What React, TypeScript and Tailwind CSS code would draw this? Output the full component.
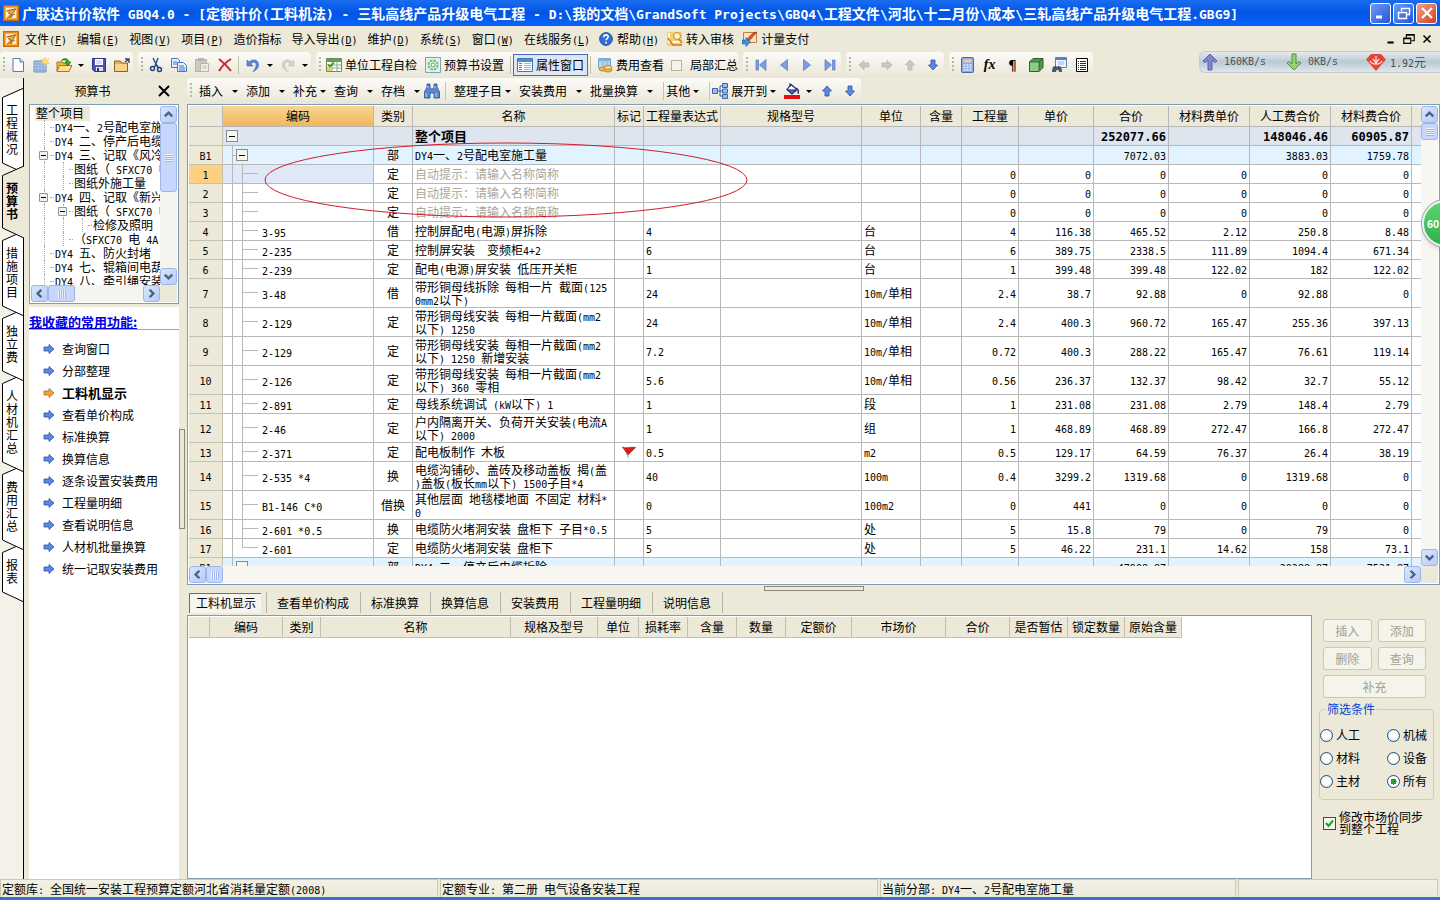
import { Fragment, useState } from "react";
import type { ReactNode } from "react";
import clsx from "clsx";

type Row = {
  no: string;
  code: string;
  kind: string;
  name: string;
  expr?: string;
  unit?: string;
  values: string[];
  tall?: boolean;
  flag?: boolean;
  hint?: boolean;
};

const HINT = "自动提示：请输入名称简称";

const rows: Row[] = [
  { no: "1", code: "", kind: "定", name: HINT, hint: true, values: ["0", "0", "0", "0", "0", "0"] },
  { no: "2", code: "", kind: "定", name: HINT, hint: true, values: ["0", "0", "0", "0", "0", "0"] },
  { no: "3", code: "", kind: "定", name: HINT, hint: true, values: ["0", "0", "0", "0", "0", "0"] },
  { no: "4", code: "3-95", kind: "借", name: "控制屏配电(电源)屏拆除", expr: "4", unit: "台", values: ["4", "116.38", "465.52", "2.12", "250.8", "8.48"] },
  { no: "5", code: "2-235", kind: "定", name: "控制屏安装  变频柜4+2", expr: "6", unit: "台", values: ["6", "389.75", "2338.5", "111.89", "1094.4", "671.34"] },
  { no: "6", code: "2-239", kind: "定", name: "配电(电源)屏安装 低压开关柜", expr: "1", unit: "台", values: ["1", "399.48", "399.48", "122.02", "182", "122.02"] },
  { no: "7", code: "3-48", kind: "借", name: "带形铜母线拆除 每相一片 截面(125\n0mm2以下)", expr: "24", unit: "10m/单相", values: ["2.4", "38.7", "92.88", "0", "92.88", "0"], tall: true },
  { no: "8", code: "2-129", kind: "定", name: "带形铜母线安装 每相一片截面(mm2\n以下) 1250", expr: "24", unit: "10m/单相", values: ["2.4", "400.3", "960.72", "165.47", "255.36", "397.13"], tall: true },
  { no: "9", code: "2-129", kind: "定", name: "带形铜母线安装 每相一片截面(mm2\n以下) 1250 新增安装", expr: "7.2", unit: "10m/单相", values: ["0.72", "400.3", "288.22", "165.47", "76.61", "119.14"], tall: true },
  { no: "10", code: "2-126", kind: "定", name: "带形铜母线安装 每相一片截面(mm2\n以下) 360 零相", expr: "5.6", unit: "10m/单相", values: ["0.56", "236.37", "132.37", "98.42", "32.7", "55.12"], tall: true },
  { no: "11", code: "2-891", kind: "定", name: "母线系统调试 (kW以下) 1", expr: "1", unit: "段", values: ["1", "231.08", "231.08", "2.79", "148.4", "2.79"] },
  { no: "12", code: "2-46", kind: "定", name: "户内隔离开关、负荷开关安装(电流A\n以下) 2000", expr: "1", unit: "组", values: ["1", "468.89", "468.89", "272.47", "166.8", "272.47"], tall: true },
  { no: "13", code: "2-371", kind: "定", name: "配电板制作 木板", expr: "0.5", unit: "m2", values: ["0.5", "129.17", "64.59", "76.37", "26.4", "38.19"], flag: true },
  { no: "14", code: "2-535 *4", kind: "换", name: "电缆沟铺砂、盖砖及移动盖板 揭(盖\n)盖板(板长mm以下) 1500子目*4", expr: "40", unit: "100m", values: ["0.4", "3299.2", "1319.68", "0", "1319.68", "0"], tall: true },
  { no: "15", code: "B1-146 C*0", kind: "借换", name: "其他层面 地毯楼地面 不固定 材料*\n0", expr: "0", unit: "100m2", values: ["0", "441", "0", "0", "0", "0"], tall: true },
  { no: "16", code: "2-601 *0.5", kind: "换", name: "电缆防火堵洞安装 盘柜下 子目*0.5", expr: "5", unit: "处", values: ["5", "15.8", "79", "0", "79", "0"] },
  { no: "17", code: "2-601", kind: "定", name: "电缆防火堵洞安装 盘柜下", expr: "5", unit: "处", values: ["5", "46.22", "231.1", "14.62", "158", "73.1"] },
];

const gridColumns = [
  { title: "", width: "w-[34px]" },
  { title: "编码", width: "w-[151px]" },
  { title: "类别", width: "w-[39px]" },
  { title: "名称", width: "w-[202px]" },
  { title: "标记", width: "w-[29px]" },
  { title: "工程量表达式", width: "w-[77px]" },
  { title: "规格型号", width: "w-[141px]" },
  { title: "单位", width: "w-[59px]" },
  { title: "含量", width: "w-[41px]" },
  { title: "工程量", width: "w-[57px]" },
  { title: "单价", width: "w-[75px]" },
  { title: "合价", width: "w-[75px]" },
  { title: "材料费单价", width: "w-[81px]" },
  { title: "人工费合价", width: "w-[81px]" },
  { title: "材料费合价", width: "w-[81px]" },
  { title: "", width: "" },
];

const detailColumns = [
  { title: "", width: "w-[21px]" },
  { title: "编码", width: "w-[73px]" },
  { title: "类别", width: "w-[38px]" },
  { title: "名称", width: "w-[190px]" },
  { title: "规格及型号", width: "w-[87px]" },
  { title: "单位", width: "w-[41px]" },
  { title: "损耗率", width: "w-[49px]" },
  { title: "含量", width: "w-[49px]" },
  { title: "数量", width: "w-[49px]" },
  { title: "定额价", width: "w-[66px]" },
  { title: "市场价", width: "w-[94px]" },
  { title: "合价", width: "w-[64px]" },
  { title: "是否暂估", width: "w-[58px]" },
  { title: "锁定数量", width: "w-[57px]" },
  { title: "原始含量", width: "w-[57px]" },
];

const menus: [string, string][] = [
  ["文件", "F"],
  ["编辑", "E"],
  ["视图", "V"],
  ["项目", "P"],
  ["造价指标", ""],
  ["导入导出", "D"],
  ["维护", "D"],
  ["系统", "S"],
  ["窗口", "W"],
  ["在线服务", "L"],
];

const sideTabs = ["工程概况", "预算书", "措施项目", "独立费", "人材机汇总", "费用汇总", "报表"];

const favorites = [
  "查询窗口",
  "分部整理",
  "工料机显示",
  "查看单价构成",
  "标准换算",
  "换算信息",
  "逐条设置安装费用",
  "工程量明细",
  "查看说明信息",
  "人材机批量换算",
  "统一记取安装费用",
];

const detailTabs = ["工料机显示", "查看单价构成", "标准换算", "换算信息", "安装费用", "工程量明细", "说明信息"];

const filters = ["人工", "机械", "材料", "设备", "主材", "所有"];

// Latin runs are set in a half-width face so that two letters span one CJK cell
function Mix({ children, latin = "text-[10px]" }: { children: string; latin?: string }) {
  return (
    <>
      {children.split(/([\x20-\x7e]+)/).map((part, i) =>
        i % 2 ? (
          <span key={i} className={clsx("font-['DejaVu_Sans_Mono',monospace] leading-[8px]", latin)}>
            {part}
          </span>
        ) : (
          <Fragment key={i}>{part}</Fragment>
        )
      )}
    </>
  );
}

function Svg({ children, size = "size-4" }: { children: ReactNode; size?: string }) {
  return (
    <svg viewBox="0 0 16 16" className={clsx("shrink-0", size)} fill="none" aria-hidden="true">
      {children}
    </svg>
  );
}

const AppIcon = () => (
  <Svg>
    <rect x=".5" y=".5" width="15" height="15" fill="#e98a1c" stroke="#c56a10" />
    <path d="M2.500 2.500h11v11h-11z" fill="#fdf0d0" stroke="#f6b54c" />
    <path d="M3.500 6 13 3.500 10 8l-2 5H4l3-4.500z" fill="#f3a93c" />
    <path d="M3.500 6c3-1 6-1 9-2.500M4 13c4-1 6-4 8.500-9M5 7.500l3.500 2M8 13c1-2 1.500-3 4-4" stroke="#8a4a0a" strokeWidth=".9" />
  </Svg>
);

const NewIcon = () => (
  <Svg>
    <path d="M3 1.500h7l3.500 3.500v9.500H3z" fill="#fdfeff" stroke="#5f7a9c" />
    <path d="M10 1.500V5h3.500" fill="#cfdff0" stroke="#5f7a9c" />
  </Svg>
);
const CalendarIcon = () => (
  <Svg>
    <path d="M1 4h10l2 2v9H1z" fill="#b9d0ee" stroke="#6c8fc0" />
    <path d="M4 4v11M7 4v11M10 4v11M1 7h12M1 10h12M1 13h12" stroke="#7598cc" strokeWidth=".7" />
    <path d="m12 0 1 3 3-1-2 2.500 2 2-3-.5-1 3-1-3-3 .5 2-2-2-2.500 3 1z" fill="#ffe27a" stroke="#f0bb45" strokeWidth=".5" />
  </Svg>
);
const OpenIcon = () => (
  <Svg>
    <path d="M1 5h5l1 1h6v8H1z" fill="#f0b63c" stroke="#a8741a" />
    <path d="M3.500 8.500H16l-3 6H1z" fill="#ffe08a" stroke="#a8741a" />
    <path d="M5 4c3-4 7-3 8 1h2l-3.500 4L9 5h2C10 3 8 2 5 4z" fill="#38a82c" stroke="#1c6e16" strokeWidth=".6" />
  </Svg>
);
const SaveIcon = () => (
  <Svg>
    <path d="M1.500 1.500h13v13h-11l-2-2z" fill="#5053b4" stroke="#2e3184" />
    <path d="M4 2h8v6H4z" fill="#fff" />
    <path d="M5 4h6M5 6h6" stroke="#b9bbd8" />
    <path d="M5 10h7v4H5z" fill="#dcdff0" />
    <path d="M6 11h2v3H6z" fill="#2e3184" />
  </Svg>
);
const FolderIcon = () => (
  <Svg>
    <path d="M.5 4h6l1 2h6v8.500H.5z" fill="#e8b24a" stroke="#8b6420" />
    <path d="M1 7h12v7H1z" fill="#f6d488" />
    <path d="M11 2h4v4M15 2l-4 3" stroke="#40454f" strokeWidth="1.300" />
  </Svg>
);
const CutIcon = () => (
  <Svg>
    <path d="M5 1l5 10M10 1 7 9" stroke="#29559b" strokeWidth="1.500" />
    <circle cx="4.500" cy="11.500" r="2" stroke="#1c3c78" strokeWidth="1.400" />
    <circle cx="11.500" cy="12.500" r="2" stroke="#1c3c78" strokeWidth="1.400" />
    <path d="m6 10 3-2 2 3" stroke="#1c3c78" />
  </Svg>
);
const CopyIcon = () => (
  <Svg>
    <path d="M.5 1.500h6l2 2v7h-8z" fill="#e6f0fd" stroke="#4377c4" />
    <path d="M2 5h4M2 7h4" stroke="#4377c4" />
    <path d="M6.500 5.500h6l3 3v6h-9z" fill="#e6f0fd" stroke="#4377c4" />
    <path d="M8 9h5M8 11h6M8 13h6" stroke="#4377c4" />
  </Svg>
);
const PasteIcon = () => (
  <Svg>
    <path d="M1.500 2.500h11v12h-11z" fill="#cbcac2" stroke="#b5b4aa" />
    <path d="M4 1h6v3H4z" fill="#b5b4aa" />
    <path d="M6.500 6.500h8v8h-8z" fill="#efeee8" stroke="#b5b4aa" />
    <path d="M8 9h5M8 11h5" stroke="#c4c3ba" />
  </Svg>
);
const DeleteIcon = () => (
  <Svg>
    <path d="M2 2c4 3 8 7 12 12M14 2C9 5 5 9 2 14" stroke="#d2222e" strokeWidth="2" />
  </Svg>
);
const UndoIcon = ({ off }: { off?: boolean }) => (
  <Svg>
    <g transform={off ? "matrix(-1 0 0 1 16 0)" : undefined}>
      <path d="M2 3v6h6L6 7c2-3 6-2 5 2-.4 2-1.500 4-3 5.500C12 13 14 10 13.500 7 13 2.500 7.500 1.500 4 5z" fill={off ? "#d4d3cb" : "#5b86dc"} stroke={off ? "#c3c2b9" : "#3a60b8"} strokeWidth=".6" />
    </g>
  </Svg>
);
const SheetCheckIcon = () => (
  <Svg>
    <path d="M.5 1.500h15v13H.5z" fill="#fff" stroke="#6e8a66" />
    <path d="M1 2h14v3H1z" fill="#5da24c" />
    <path d="M1 8h14M1 11h14M6 5v9M11 5v9" stroke="#8aa882" />
    <path d="M1 10h5v4H1z" fill="#f0c94e" />
    <path d="m2 7.500 2 2 4-4" stroke="#2c8a1e" strokeWidth="1.500" />
  </Svg>
);
const GearIcon = () => (
  <Svg>
    <path d="M.5.5h15v15H.5z" fill="#e2f1e4" stroke="#7ba3b8" />
    <circle cx="8" cy="8" r="4.500" stroke="#77b87a" strokeWidth="2" strokeDasharray="2.500 1" />
    <circle cx="8" cy="8" r="2" fill="#fff" stroke="#5ca660" />
  </Svg>
);
const PropsIcon = () => (
  <Svg>
    <path d="M.5 1.500h15v13H.5z" fill="#fff" stroke="#3d78b8" />
    <path d="M1 2h14v3H1z" fill="#4d8dd0" />
    <path d="M2 6.500h3M2 8.500h3M2 10.500h3M2 12.500h3" stroke="#3f9a5a" />
    <path d="M7 6.500h7M7 8.500h7M7 10.500h7M7 12.500h7" stroke="#a8b8c8" />
  </Svg>
);
const CoinsIcon = () => (
  <Svg>
    <path d="M1.500 1.500h12v9h-12z" fill="#dcecf8" stroke="#6fa5cc" />
    <path d="M2 2h11v2H2zM2 6h11M2 8h11M6 2v8M10 2v8" fill="#6fa5cc" stroke="#8db8d8" />
    <ellipse cx="6" cy="12" rx="4" ry="2" fill="#f2c25c" stroke="#bd8424" />
    <ellipse cx="11" cy="13" rx="4" ry="2" fill="#f2c25c" stroke="#bd8424" />
    <ellipse cx="11" cy="10.500" rx="4" ry="2" fill="#f8d888" stroke="#bd8424" />
  </Svg>
);

const navPaths = {
  first: "M3 3h2.500v10H3zM13 2.500v11L6.500 8z",
  prev: "M11.500 2.500v11L4.500 8z",
  next: "M4.500 2.500v11l7-5.500z",
  last: "M10.500 3H13v10h-2.500zM3 2.500v11L9.500 8z",
};
const NavIcon = ({ kind }: { kind: keyof typeof navPaths }) => (
  <Svg>
    <path d={navPaths[kind]} fill="#7d9ce8" stroke="#5276cc" strokeWidth=".7" />
  </Svg>
);

const arrowPaths = {
  left: "M3 8l5-4.500v2.500h5v4H8v2.500z",
  right: "M13 8 8 3.500V6H3v4h5v2.500z",
  up: "M8 3l4.500 5H10v5H6V8H3.500z",
  down: "M8 13l4.500-5H10V3H6v5H3.500z",
};
const ArrowIcon = ({ dir, tone = "blue" }: { dir: keyof typeof arrowPaths; tone?: "blue" | "gray" | "orange" }) => (
  <Svg>
    <path
      d={arrowPaths[dir]}
      fill={{ blue: "#5a88e6", gray: "#c9c8c0", orange: "#f3a13c" }[tone]}
      stroke={{ blue: "#2c4f9e", gray: "#bab9b0", orange: "#b06a1c" }[tone]}
      strokeWidth=".8"
    />
  </Svg>
);

const CalcIcon = () => (
  <Svg>
    <rect x="2.500" y=".5" width="12" height="15" rx="1" fill="#8fa9e0" stroke="#4a68a8" />
    <path d="M4.500 2.500h8v3h-8z" fill="#f5c9a8" />
    <path d="M4.500 8h8M4.500 10.500h8M4.500 13h8" stroke="#eef3ff" strokeWidth="1.500" strokeDasharray="2 1" />
  </Svg>
);
const CubeIcon = () => (
  <Svg>
    <path d="M1.500 5 5 1.500h10v9L11 14.500H1.500z" fill="#4d9a4b" stroke="#2c5f2c" />
    <path d="M1.500 5H11v9.500M11 5l4-3.500" stroke="#2c5f2c" />
    <path d="M2 5.500h8.500V14H2z" fill="#8fca86" />
  </Svg>
);
const PreviewIcon = () => (
  <Svg>
    <path d="M4.500.5h11v10h-11z" fill="#eef4fd" stroke="#5a80c0" />
    <path d="M5 1h10v2H5z" fill="#5a80c0" />
    <path d="M7 5h6M7 7h6" stroke="#9ab4de" />
    <path d="M1 15c0-4 1-6 3-6h1l1 1 1-1h1c2 0 3 2 3 6H8l-.5-2h-2L5 15z" fill="#4b5566" />
  </Svg>
);
const ListIcon = () => (
  <Svg>
    <path d="M2.500 1.500h11v13h-11z" fill="#fff" stroke="#000" />
    <path d="M4 4.500h1M4 6.500h1M4 8.500h1M4 10.500h1M4 12.500h1M6 4.500h6M6 6.500h6M6 8.500h6M6 10.500h6M6 12.500h6" stroke="#1c2a6a" />
  </Svg>
);
const BinocularsIcon = () => (
  <Svg>
    <path d="M3 1h3v3l1 2h2l1-2V1h3v3l2.500 5v6H10v-5H6v5H.5V9L3 4z" fill="#5c86d4" stroke="#2a4a90" strokeWidth=".8" />
    <path d="M2 10v4M12 10v4M4 3v2M11 3v2" stroke="#c4d6f8" />
  </Svg>
);
const ExpandIcon = () => (
  <Svg>
    <path d="M5 8h3M8 3v10M8 3h3M8 8h3M8 13h3" stroke="#44598c" />
    <path d="M.5 5.500h5v5h-5zM10.500.5h5v4h-5zM10.500 6h5v4h-5zM10.500 11.500h5v4h-5z" fill="#9dbcf0" stroke="#3d63b0" />
  </Svg>
);
const FillIcon = () => (
  <Svg>
    <path d="m7 1.500 6 5-5 4.500-5-4.500z" fill="#fff" stroke="#15206a" strokeWidth="1.200" />
    <path d="M4 7h8l-4 4zM12 5c3 1 3 3 2 6" fill="#5a6cc0" stroke="#15206a" />
    <path d="M6 0v4" stroke="#15206a" />
    <path d="M0 12h16v4H0z" fill="#e01010" />
  </Svg>
);
const HelpIcon = () => (
  <Svg size="size-[14px]">
    <circle cx="8" cy="8" r="7.300" fill="#2f6fd8" stroke="#1c479c" />
    <path d="M5.500 6c0-3.500 5-3.500 5-.5 0 2-2.500 2-2.500 4M8 11v2" stroke="#fff" strokeWidth="1.800" />
  </Svg>
);
const ReviewIcon = () => (
  <Svg>
    <path d="M0 1h15v14H0z" fill="#f5cf6c" />
    <path d="M2 2v9h11" stroke="#fff6dc" strokeWidth="2" />
    <path d="M1 7l5 7h9" stroke="#d97a1c" strokeWidth="1.600" />
    <circle cx="10" cy="5" r="3.500" fill="#fdf3d0" stroke="#c98a2c" />
    <path d="m12 8 3 4" stroke="#c98a2c" strokeWidth="1.500" />
  </Svg>
);
const PayIcon = () => (
  <Svg>
    <path d="M1.500 1.500h13v10h-13z" fill="#fbe3c0" stroke="#c97a3c" />
    <path d="m15 1-8 9-3 1 1-3 6-6z" fill="#e0552c" stroke="#8c2c10" strokeWidth=".6" />
    <path d="M0 9h4V6.500L8.500 11 4 15.500V13H0z" fill="#3c8fe0" stroke="#1c5aa0" strokeWidth=".6" />
  </Svg>
);

const Caret = () => <span className="h-0 w-0 shrink-0 border-x-3 border-t-3 border-x-transparent border-t-black" />;

const Divider = () => <span className="mx-[2px] h-[18px] w-px shrink-0 bg-[#c5c2b0]" />;

function Group({ children }: { children: ReactNode }) {
  return (
    <div className="flex h-full shrink-0 items-center rounded-sm bg-gradient-to-b from-[#fcfbf8] to-[#e9e6d6]">
      <span className="ml-[3px] mr-px h-4 w-[2px] shrink-0 bg-[repeating-linear-gradient(#b9b6a3_0_2px,transparent_2px_4px)]" />
      {children}
    </div>
  );
}

function Tool({ label, children }: { label: string; children: ReactNode }) {
  return (
    <button type="button" aria-label={label} className="flex h-[22px] w-[23px] shrink-0 items-center justify-center">
      {children}
    </button>
  );
}

function DropArrow({ label }: { label: string }) {
  return (
    <button type="button" aria-label={label} className="flex h-[22px] w-3 shrink-0 items-center justify-center">
      <Caret />
    </button>
  );
}

function TextTool({ text, pressed, children }: { text: string; pressed?: boolean; children: ReactNode }) {
  return (
    <button
      type="button"
      className={clsx(
        "flex h-[22px] shrink-0 items-center gap-[3px] border px-[3px]",
        pressed ? "border-[#4a6cb8] bg-[#dfe6f3]" : "border-transparent"
      )}
    >
      {children}
      {text}
    </button>
  );
}

function DropTool({ text, wide, tight, children }: { text: string; wide?: boolean; tight?: boolean; children?: ReactNode }) {
  return (
    <button type="button" className={clsx("flex h-[22px] shrink-0 items-center gap-[3px]", !tight && "pr-2")}>
      {children}
      <span className={wide ? "pr-[6px]" : ""}>{text}</span>
      <Caret />
    </button>
  );
}

const chevrons = { up: "M4 10l4-4 4 4", down: "M4 6l4 4 4-4", left: "M10 4 6 8l4 4", right: "M6 4l4 4-4 4" };

function ScrollButton({ dir, label }: { dir: keyof typeof chevrons; label: string }) {
  return (
    <button
      type="button"
      aria-label={label}
      className="flex size-[17px] shrink-0 items-center justify-center rounded-[3px] border border-[#9db5e8] bg-gradient-to-br from-[#dbe6fd] to-[#b7cbf8]"
    >
      <Svg size="size-[15px]">
        <path d={chevrons[dir]} stroke="#4d6185" strokeWidth="2.600" />
      </Svg>
    </button>
  );
}

function Thumb({ vertical, size }: { vertical?: boolean; size: string }) {
  return (
    <div
      className={clsx(
        "flex shrink-0 items-center justify-center rounded-[3px] border border-[#9db5e8] bg-[#c6d6fc]",
        size
      )}
    >
      <span
        className={clsx(
          "size-2",
          vertical
            ? "bg-[repeating-linear-gradient(#eef4fe_0_1px,#9cb4ec_1px_2px)]"
            : "bg-[repeating-linear-gradient(90deg,#eef4fe_0_1px,#9cb4ec_1px_2px)]"
        )}
      />
    </div>
  );
}

function TitleBar() {
  const caption = "flex size-[21px] items-center justify-center rounded-[3px] border border-white";
  return (
    <header className="flex h-[26px] shrink-0 items-center bg-gradient-to-b from-[#1a6cf0] via-[#0055e5] to-[#0a64fb] px-[3px]">
      <AppIcon />
      <h1 className="ml-[3px] min-w-0 flex-1 overflow-hidden text-[14px] font-bold leading-5 whitespace-pre text-white">
        <Mix latin="text-[13px]">
          {"广联达计价软件 GBQ4.0 - [定额计价(工料机法) - 三轧高线产品升级电气工程 - D:\\我的文档\\GrandSoft Projects\\GBQ4\\工程文件\\河北\\十二月份\\成本\\三轧高线产品升级电气工程.GBG9]"}
        </Mix>
      </h1>
      <div className="flex gap-[2px]">
        <button type="button" aria-label="最小化" className={clsx(caption, "bg-gradient-to-br from-[#6f9bf5] to-[#2254d8]")}>
          <Svg>
            <path d="M3 12h6" stroke="#fff" strokeWidth="3" />
          </Svg>
        </button>
        <button type="button" aria-label="还原" className={clsx(caption, "bg-gradient-to-br from-[#6f9bf5] to-[#2254d8]")}>
          <Svg>
            <path d="M5.500 6V3.500h8v6H11M5 3.500h9M2.500 7.500h8v6h-8zM2 7.500h9" stroke="#fff" strokeWidth="1.400" />
          </Svg>
        </button>
        <button type="button" aria-label="关闭" className={clsx(caption, "bg-gradient-to-br from-[#f0a088] to-[#d03a14]")}>
          <Svg>
            <path d="m3 3 10 10M13 3 3 13" stroke="#fff" strokeWidth="2.200" />
          </Svg>
        </button>
      </div>
    </header>
  );
}

function MenuBar() {
  return (
    <nav className="flex h-[26px] shrink-0 items-center pl-[3px] pr-[6px]">
      <AppIcon />
      <div className="ml-[6px] flex items-center gap-[10px]">
        {menus.map(([text, key]) => (
          <button key={text} type="button" className="shrink-0 whitespace-nowrap">
            {text}
            {key && (
              <span className="font-['DejaVu_Sans_Mono',monospace] text-[10px] leading-[8px]">
                (<u>{key}</u>)
              </span>
            )}
          </button>
        ))}
      </div>
      <div className="ml-[9px] flex items-center gap-2">
        <button type="button" className="flex items-center gap-1 whitespace-nowrap">
          <HelpIcon />
          <span>
            帮助
            <span className="font-['DejaVu_Sans_Mono',monospace] text-[10px] leading-[8px]">
              (<u>H</u>)
            </span>
          </span>
        </button>
        <button type="button" className="flex items-center gap-[3px] whitespace-nowrap">
          <ReviewIcon />
          转入审核
        </button>
        <button type="button" className="flex items-center gap-[3px] whitespace-nowrap">
          <PayIcon />
          计量支付
        </button>
      </div>
      <div className="ml-auto flex items-center gap-1">
        <button type="button" aria-label="最小化文档">
          <Svg size="size-[14px]">
            <path d="M4 12h7" stroke="#000" strokeWidth="2.400" />
          </Svg>
        </button>
        <button type="button" aria-label="还原文档">
          <Svg size="size-[14px]">
            <path d="M5 6V3h9v7h-3M5 3.500h9M2 7h8v6H2zM2 7.500h8" stroke="#000" strokeWidth="1.300" />
          </Svg>
        </button>
        <button type="button" aria-label="关闭文档">
          <Svg size="size-[14px]">
            <path d="m4 4 8 8M12 4l-8 8" stroke="#000" strokeWidth="1.700" />
          </Svg>
        </button>
      </div>
    </nav>
  );
}

function NetMeter() {
  return (
    <div className="absolute right-0 -top-px flex h-[22px] w-[241px] items-center rounded-l-md border border-r-0 border-[#c4ccd0] bg-gradient-to-b from-[#e4e9ec] via-[#bccad4] to-[#dfe7ea] text-[#4a5258]">
      <div className="flex w-[84px] items-center gap-[6px] pl-[2px]">
        <svg viewBox="0 0 16 18" className="h-[18px] w-4" fill="none" aria-hidden="true">
          <path d="M8 1l7 7-2 1.500L10 7v10H6V7L3 9.500 1 8z" fill="#8088cc" stroke="#5a62a8" />
        </svg>
        <Mix>160KB/s</Mix>
      </div>
      <div className="flex flex-1 items-center gap-[6px] pl-[2px]">
        <svg viewBox="0 0 16 18" className="h-[18px] w-4" fill="none" aria-hidden="true">
          <path d="M8 17l7-7-2-1.500L10 11V1H6v10L3 8.500 1 10z" fill="#9ad07c" stroke="#4c9434" />
        </svg>
        <Mix>0KB/s</Mix>
      </div>
      <div className="flex w-[74px] items-center gap-1 whitespace-nowrap">
        <svg viewBox="0 0 20 18" className="h-[18px] w-5" fill="none" aria-hidden="true">
          <path d="M5 1h10l5 5.500L10 18 0 6.500z" fill="#e2453c" />
          <path d="M4 8c2 4 10 4 12 0M10 3v6M7 6l3 4 3-4" stroke="#fbd8d2" strokeWidth="1.300" />
        </svg>
        <span>
          <Mix>1.92元</Mix>
        </span>
      </div>
    </div>
  );
}

function MainToolbar() {
  return (
    <div className="relative flex h-[26px] shrink-0 items-center gap-[5px]">
      <Group>
        <Tool label="新建"><NewIcon /></Tool>
        <Tool label="新建向导"><CalendarIcon /></Tool>
        <Tool label="打开"><OpenIcon /></Tool>
        <DropArrow label="最近文件" />
        <Tool label="保存"><SaveIcon /></Tool>
        <Tool label="另存为"><FolderIcon /></Tool>
      </Group>
      <Group>
        <Tool label="剪切"><CutIcon /></Tool>
        <Tool label="复制"><CopyIcon /></Tool>
        <Tool label="粘贴"><PasteIcon /></Tool>
        <Tool label="删除"><DeleteIcon /></Tool>
        <Divider />
        <Tool label="撤销"><UndoIcon /></Tool>
        <DropArrow label="撤销列表" />
        <Tool label="重做"><UndoIcon off /></Tool>
        <DropArrow label="重做列表" />
      </Group>
      <Group>
        <TextTool text="单位工程自检"><SheetCheckIcon /></TextTool>
        <TextTool text="预算书设置"><GearIcon /></TextTool>
        <Divider />
        <TextTool text="属性窗口" pressed><PropsIcon /></TextTool>
        <Divider />
        <TextTool text="费用查看"><CoinsIcon /></TextTool>
        <label className="flex items-center gap-2 pl-[3px] whitespace-nowrap">
          <input type="checkbox" className="size-[11px] appearance-none border border-[#b5b2a0] bg-[#f4f3ec]" />
          局部汇总
        </label>
      </Group>
      <Group>
        <Tool label="第一条"><NavIcon kind="first" /></Tool>
        <Tool label="上一条"><NavIcon kind="prev" /></Tool>
        <Tool label="下一条"><NavIcon kind="next" /></Tool>
        <Tool label="最后一条"><NavIcon kind="last" /></Tool>
      </Group>
      <Group>
        <Tool label="升级"><ArrowIcon dir="left" tone="gray" /></Tool>
        <Tool label="降级"><ArrowIcon dir="right" tone="gray" /></Tool>
        <Tool label="上移"><ArrowIcon dir="up" tone="gray" /></Tool>
        <Tool label="下移"><ArrowIcon dir="down" /></Tool>
      </Group>
      <Group>
        <Tool label="计算器"><CalcIcon /></Tool>
        <Tool label="函数">
          <span className="font-['Liberation_Serif',serif] text-[14px] font-bold italic">fx</span>
        </Tool>
        <Tool label="段落">
          <span className="font-['DejaVu_Sans',sans-serif] text-[14px]">¶</span>
        </Tool>
        <Tool label="图库"><CubeIcon /></Tool>
        <Tool label="预览"><PreviewIcon /></Tool>
        <Tool label="清单"><ListIcon /></Tool>
      </Group>
      <NetMeter />
    </div>
  );
}

function EditToolbar() {
  return (
    <div className="flex h-[26px] shrink-0 items-center">
      <Group>
        <div className="flex items-center pl-[6px]">
          <DropTool text="插入" wide />
          <DropTool text="添加" wide />
          <DropTool text="补充" />
          <DropTool text="查询" wide />
          <DropTool text="存档" wide tight />
        </div>
        <Tool label="查找"><BinocularsIcon /></Tool>
        <Divider />
        <div className="flex items-center pl-[6px]">
          <DropTool text="整理子目" />
          <DropTool text="安装费用" wide />
          <DropTool text="批量换算" wide />
        </div>
        <Divider />
        <DropTool text="其他" />
        <Divider />
        <DropTool text="展开到">
          <ExpandIcon />
        </DropTool>
        <button type="button" aria-label="填充颜色" className="flex shrink-0 items-center gap-[6px] pr-[3px]">
          <FillIcon />
          <Caret />
        </button>
        <Tool label="上移一行"><ArrowIcon dir="up" /></Tool>
        <Tool label="下移一行"><ArrowIcon dir="down" /></Tool>
      </Group>
    </div>
  );
}

function SideTabs() {
  const [active, setActive] = useState("预算书");
  return (
    <div className="flex w-6 shrink-0 flex-col border-r border-black bg-[#f3f1e8] pt-[10px]">
      {sideTabs.map((tab, i) => {
        const h = tab.length * 13 + 26;
        const on = tab === active;
        return (
          <button
            key={tab}
            type="button"
            onClick={() => setActive(tab)}
            className="relative flex w-6 items-center justify-center pt-1"
            style={{ height: h, zIndex: on ? 20 : 10 - i }}
          >
            <svg
              viewBox={`0 0 24 ${h}`}
              width="24"
              height={h}
              className="absolute left-0 top-0 overflow-visible"
              aria-hidden="true"
            >
              <path
                d={`M24 0 2.500 9.500V${h - 3}L24 ${h + 7}`}
                fill={on ? "#ece9d8" : "#fff"}
                stroke="#000"
              />
              {!on && <path d={`M23.500 0V${h + 7}`} stroke="#000" />}
            </svg>
            <span className={clsx("relative w-3 leading-[13px] break-all", on && "font-bold")}>{tab}</span>
          </button>
        );
      })}
    </div>
  );
}

// One indent level of the project tree with its dotted guide line
const Guide = () => <span className="ml-[13px] h-[14px] w-[6px] shrink-0 border-l border-dotted border-[#a8a8a8]" />;

const TreeBox = () => (
  <span className="relative z-10 -ml-[11px] mr-[2px] flex size-[9px] shrink-0 items-center justify-center rounded-[1px] border border-[#7b98b5] bg-[#f3f2ec]">
    <span className="h-px w-[5px] bg-black" />
  </span>
);

const tree: { text: string; level: number; open?: boolean }[] = [
  { text: "DY4一、2号配电室施工量", level: 1 },
  { text: "DY4 二、停产后电缆拆除", level: 1 },
  { text: "DY4 三、记取《风冷", level: 1, open: true },
  { text: "图纸（ SFXC70 电 4A", level: 2 },
  { text: "图纸外施工量", level: 2 },
  { text: "DY4 四、记取《新兴", level: 1, open: true },
  { text: "图纸（ SFXC70 电 4A", level: 2, open: true },
  { text: "检修及照明 :", level: 3 },
  { text: "（SFXC70 电 4A", level: 2 },
  { text: "DY4 五、防火封堵", level: 1 },
  { text: "DY4 七、辊箱间电葫芦", level: 1 },
  { text: "DY4 八、牵引绳安装", level: 1 },
];

function ProjectTree() {
  return (
    <div className="flex h-[200px] flex-col border border-[#7f9db9] bg-white p-px">
      <div className="flex min-h-0 flex-1">
        <ul className="min-w-0 flex-1 overflow-hidden leading-[14px] whitespace-nowrap">
          <li>
            <span className="ml-1 bg-[#ece9d8] pl-px pr-[6px]">整个项目</span>
          </li>
          {tree.map((node, i) => (
            <li key={i} className="flex h-[14px] items-center">
              {Array.from({ length: node.level }, (_, n) => (
                <Guide key={n} />
              ))}
              {node.open && <TreeBox />}
              <span className="mr-px w-1 shrink-0 border-t border-dotted border-[#a8a8a8]" />
              <span>
                <Mix>{node.text}</Mix>
              </span>
            </li>
          ))}
        </ul>
        <div className="flex w-[17px] shrink-0 flex-col bg-[#f5f4ee]">
          <ScrollButton dir="up" label="目录向上滚动" />
          <Thumb vertical size="h-[69px] w-[17px]" />
          <div className="flex-1" />
          <ScrollButton dir="down" label="目录向下滚动" />
        </div>
      </div>
      <div className="flex h-[17px] shrink-0 bg-[#ece9d8] pr-[17px]">
        <div className="flex flex-1 bg-[#f5f4ee]">
          <ScrollButton dir="left" label="目录向左滚动" />
          <Thumb size="h-[17px] w-[27px]" />
          <div className="flex-1" />
          <ScrollButton dir="right" label="目录向右滚动" />
        </div>
      </div>
    </div>
  );
}

function Sidebar() {
  return (
    <aside className="flex w-[163px] shrink-0">
      <div className="flex min-w-0 flex-1 flex-col pl-[5px]">
        <div className="flex h-[26px] shrink-0 items-center pr-[7px]">
          <h2 className="flex-1 text-center">预算书</h2>
          <button type="button" aria-label="关闭面板">
            <Svg>
              <path d="m3 3 10 10M13 3 3 13" stroke="#000" strokeWidth="2" />
            </Svg>
          </button>
        </div>
        <ProjectTree />
        <div className="mt-[3px] flex-1 bg-white pt-[7px]">
          <h2 className="border-b border-[#9aa5b4] text-[13px] font-bold leading-[15px] text-[#0000e0] underline">
            我收藏的常用功能:
          </h2>
          <ul className="pt-2 pl-3">
            {favorites.map((item) => {
              const on = item === "工料机显示";
              return (
                <li key={item}>
                  <button
                    type="button"
                    className={clsx("flex h-[22px] items-center gap-[5px] whitespace-nowrap", on && "text-[13px] font-bold")}
                  >
                    <ArrowIcon dir="right" tone={on ? "orange" : "blue"} />
                    {item}
                  </button>
                </li>
              );
            })}
          </ul>
        </div>
      </div>
      <div className="flex w-2 shrink-0 items-center">
        <span className="h-[100px] w-[6px] border border-[#8a8878]" />
      </div>
    </aside>
  );
}

const cell = "border-r border-b border-[#b8b8b8] p-0";
const textCell = "border-r border-b border-[#b8b8b8] p-0 pb-px";
const rowHead = "border-r border-b border-[#c5c2b2] p-0 pb-px text-center font-normal";

const FoldBox = () => (
  <button type="button" aria-label="折叠" className="flex size-3 shrink-0 items-center justify-center border border-[#8a8a8a] bg-[#f6f5ef]">
    <span className="h-px w-[6px] bg-black" />
  </button>
);

function SectionRow({ no, name, values }: { no: string; name: string; values: string[] }) {
  return (
    <tr className="h-[19px] bg-[#e1f3ff]">
      <th scope="row" className={clsx(rowHead, "bg-[#ece9d8]")}><Mix>{no}</Mix></th>
      <td className={cell}>
        <div className="flex h-[18px] items-center">
          <span className="h-full w-[10px] border-r border-[#b8b8b8]" />
          <span className="w-[3px] border-t border-[#b8b8b8]" />
          <FoldBox />
        </div>
      </td>
      <td className={clsx(textCell, "text-center")}>部</td>
      <td className={clsx(textCell, "pl-[2px] whitespace-pre")}><Mix>{name}</Mix></td>
      {[0, 1, 2, 3, 4].map((n) => (
        <td key={n} className={cell} />
      ))}
      {values.map((v, n) => (
        <td key={n} className={clsx(textCell, "pr-[2px] text-right")}><Mix>{v}</Mix></td>
      ))}
      <td className="border-b border-[#b8b8b8] p-0" />
    </tr>
  );
}

function BudgetGrid() {
  const [selected, setSelected] = useState("1");
  return (
    <section className="relative flex min-h-0 flex-[480] flex-col border border-[#7f9db9] bg-white p-px">
      <div className="flex min-h-0 flex-1">
        <div className="min-w-0 flex-1 overflow-hidden">
          <table className="w-full table-fixed border-separate border-spacing-0 leading-[13px]">
            <colgroup>
              {gridColumns.map((c, i) => (
                <col key={i} className={c.width} />
              ))}
            </colgroup>
            <thead>
              <tr className="h-[21px]">
                {gridColumns.map((c, i) => (
                  <th
                    key={i}
                    className={clsx(
                      "border-b border-[#b8b8b8] p-0 pb-[2px] font-normal whitespace-nowrap",
                      i < 15 && "border-r",
                      i === 1 ? "bg-gradient-to-b from-[#f8d590] to-[#f0b75c]" : "bg-[#ece9d8]"
                    )}
                  >
                    {c.title}
                  </th>
                ))}
              </tr>
            </thead>
            <tbody>
              <tr className="h-[19px] bg-[#dee5ef] font-bold">
                <th scope="row" className={clsx(rowHead, "bg-[#ece9d8]")} />
                <td className={cell}>
                  <div className="flex h-[18px] items-center pl-[3px]">
                    <FoldBox />
                  </div>
                </td>
                <td className={cell} />
                <td className={clsx(textCell, "pl-[2px] text-[13px]")}>整个项目</td>
                {[0, 1, 2, 3, 4, 5, 6].map((n) => (
                  <td key={n} className={cell} />
                ))}
                {["252077.66", "", "148046.46", "60905.87"].map((v, n) => (
                  <td key={n} className={clsx(textCell, "pr-[2px] text-right")}><Mix latin="text-[12px]">{v}</Mix></td>
                ))}
                <td className="border-b border-[#b8b8b8] p-0" />
              </tr>
              <SectionRow no="B1" name="DY4一、2号配电室施工量" values={["", "", "7072.03", "", "3883.03", "1759.78"]} />
              {rows.map((row, i) => {
                const on = row.no === selected;
                return (
                  <tr key={row.no} className={row.tall ? "h-[29px]" : "h-[19px]"} onClick={() => setSelected(row.no)}>
                    <th scope="row" className={clsx(rowHead, on ? "bg-[#fcd080]" : "bg-[#ece9d8]")}><Mix>{row.no}</Mix></th>
                    <td className={clsx(cell, on && "bg-[#dfe8f6]")}>
                      <div className={clsx("flex whitespace-pre", row.tall ? "h-[28px]" : "h-[18px]")}>
                        <span className="w-[10px] shrink-0 border-r border-[#b8b8b8]" />
                        <span className={clsx("w-[10px] shrink-0 border-r border-[#b8b8b8]", i === rows.length - 1 && "h-1/2")} />
                        <span className="mr-1 h-1/2 w-[15px] shrink-0 border-b border-[#b8b8b8]" />
                        <span className="self-center"><Mix>{row.code}</Mix></span>
                      </div>
                    </td>
                    <td className={clsx(textCell, "text-center")}>{row.kind}</td>
                    <td className={clsx(textCell, "pl-[2px] whitespace-pre", row.hint && "text-[#a9a69a]")}>
                      <Mix>{row.name}</Mix>
                    </td>
                    <td className={cell}>
                      {row.flag && (
                        <svg viewBox="0 0 14 12" className="mx-auto h-3 w-[14px]" aria-hidden="true">
                          <path d="M.5 1c4 2 8-.5 13 .5L6 9z" fill="#d42020" stroke="#901010" strokeWidth=".6" />
                          <path d="m4.500 7 2 4.500" stroke="#7f9db0" fill="none" />
                        </svg>
                      )}
                    </td>
                    <td className={clsx(textCell, "pl-[2px]")}><Mix>{row.expr ?? ""}</Mix></td>
                    <td className={cell} />
                    <td className={clsx(textCell, "pl-[2px] whitespace-nowrap")}><Mix>{row.unit ?? ""}</Mix></td>
                    <td className={cell} />
                    {row.values.map((v, n) => (
                      <td key={n} className={clsx(textCell, "pr-[2px] text-right")}><Mix>{v}</Mix></td>
                    ))}
                    <td className="border-b border-[#b8b8b8] p-0" />
                  </tr>
                );
              })}
              <SectionRow no="B1" name="DY4 二、停产后电缆拆除" values={["", "", "47908.87", "", "20288.87", "7521.87"]} />
            </tbody>
          </table>
        </div>
        <div className="flex w-[17px] shrink-0 flex-col bg-[#f7f6f1]">
          <ScrollButton dir="up" label="表格向上滚动" />
          <Thumb vertical size="size-[17px]" />
          <div className="flex-1" />
          <ScrollButton dir="down" label="表格向下滚动" />
        </div>
      </div>
      <div className="flex h-[17px] shrink-0 bg-[#ece9d8] pr-[17px]">
        <div className="flex flex-1 bg-[#f7f6f1]">
          <ScrollButton dir="left" label="表格向左滚动" />
          <Thumb size="size-[17px]" />
          <div className="flex-1" />
          <ScrollButton dir="right" label="表格向右滚动" />
        </div>
      </div>
      {/* hand-drawn mark over the empty rows */}
      <svg
        viewBox="0 0 484 76"
        className="pointer-events-none absolute left-[76px] top-[37px] h-[76px] w-[484px]"
        fill="none"
        aria-hidden="true"
      >
        <ellipse cx="242" cy="38" rx="241" ry="37" stroke="#d01c2c" />
      </svg>
    </section>
  );
}

function DetailPane() {
  const [tab, setTab] = useState(detailTabs[0]);
  return (
    <>
      <div className="flex h-[7px] shrink-0 items-center justify-center">
        <span className="h-[5px] w-[100px] border border-[#8a8878]" />
      </div>
      <div className="flex h-[23px] shrink-0 items-start pl-[2px]">
        {detailTabs.map((t) => (
          <div key={t} className="flex h-[21px] items-center border-r border-[#b5b2a0] whitespace-nowrap first:pr-[5px]">
            <button
              type="button"
              onClick={() => setTab(t)}
              className={clsx(
                "h-5 leading-[18px]",
                t === tab
                  ? "border-t border-l border-[#716f64] bg-[#f5f4ee] pr-[5px] pl-[6px]"
                  : "pr-[11px] pl-[10px]"
              )}
            >
              {t}
            </button>
          </div>
        ))}
      </div>
      <div className="flex min-h-0 flex-[265]">
        <div className="min-w-0 flex-1 overflow-hidden border border-[#7f9db9] bg-white p-px">
          <table className="w-[993px] table-fixed border-separate border-spacing-0 leading-[13px]">
            <colgroup>
              {detailColumns.map((c, i) => (
                <col key={i} className={c.width} />
              ))}
            </colgroup>
            <thead>
              <tr className="h-[21px]">
                {detailColumns.map((c, i) => (
                  <th key={i} className="border-r border-b border-[#c2bfae] bg-[#ece9d8] p-0 pb-[2px] font-normal whitespace-nowrap">
                    {c.title}
                  </th>
                ))}
              </tr>
            </thead>
          </table>
        </div>
        <FilterPanel />
      </div>
    </>
  );
}

function FilterPanel() {
  const [filter, setFilter] = useState("所有");
  const [sync, setSync] = useState(true);
  const btn = "h-[23px] rounded-[3px] border border-[#c9c7ba] bg-[#f5f4ea] text-[#a1a192]";
  return (
    <div className="flex w-32 shrink-0 flex-col pl-[7px] pr-[6px] pt-1">
      <div className="grid grid-cols-2 gap-x-[6px] gap-y-[5px] pl-1 pr-2">
        <button type="button" disabled className={btn}>插入</button>
        <button type="button" disabled className={btn}>添加</button>
        <button type="button" disabled className={btn}>删除</button>
        <button type="button" disabled className={btn}>查询</button>
        <button type="button" disabled className={clsx(btn, "col-span-2")}>补充</button>
      </div>
      <fieldset className="mt-1 rounded-[4px] border border-[#cfccba] pb-[9px]">
        <legend className="ml-[5px] px-[2px] leading-[14px] text-[#0046d5]">筛选条件</legend>
        <div className="grid grid-cols-[67px_auto] gap-y-[5px] pt-[10px]">
          {filters.map((f) => (
            <label key={f} className="flex h-[18px] items-center gap-[3px] whitespace-nowrap">
              <input
                type="radio"
                name="filter"
                checked={filter === f}
                onChange={() => setFilter(f)}
                className="size-[13px] shrink-0 appearance-none rounded-full border border-[#1c5180] bg-[radial-gradient(#fff_40%,#dcdcd4)] checked:bg-[radial-gradient(#21a121_0_3px,#fff_3px)]"
              />
              {f}
            </label>
          ))}
        </div>
      </fieldset>
      <label className="mt-[11px] flex items-center gap-[3px] pl-1 leading-3 whitespace-nowrap">
        <span className="relative size-[13px] shrink-0">
          <input
            type="checkbox"
            checked={sync}
            onChange={() => setSync(!sync)}
            className="block size-[13px] appearance-none border border-[#1c5180] bg-[#f6f6f2]"
          />
          {sync && (
            <svg viewBox="0 0 13 13" className="pointer-events-none absolute inset-0" fill="none" aria-hidden="true">
              <path d="m3 6 2.500 3L10 3.500" stroke="#21a121" strokeWidth="2" />
            </svg>
          )}
        </span>
        <span>
          修改市场价同步
          <br />
          到整个工程
        </span>
      </label>
    </div>
  );
}

function StatusBar() {
  const seg = "flex min-w-0 items-center overflow-hidden border border-[#cbc8b6] border-b-0 bg-gradient-to-b from-[#f3f1e6] to-[#eceada] pl-px whitespace-pre";
  return (
    <footer className="flex h-[21px] shrink-0 gap-[2px] border-b-3 border-[#3a6fc8] pr-[2px]">
      <div className={clsx(seg, "flex-[438]")}><span><Mix>定额库: 全国统一安装工程预算定额河北省消耗量定额(2008)</Mix></span></div>
      <div className={clsx(seg, "flex-[438]")}><span><Mix>定额专业: 第二册 电气设备安装工程</Mix></span></div>
      <div className={clsx(seg, "flex-[356]")}><span><Mix>当前分部: DY4一、2号配电室施工量</Mix></span></div>
      <div className={clsx(seg, "flex-[198]")} />
    </footer>
  );
}

export default function App() {
  return (
    <div className="relative flex h-screen flex-col overflow-hidden bg-[#ece9d8] font-['Noto_Sans_CJK_SC',sans-serif] text-[12px] leading-4 text-black">
      <TitleBar />
      <MenuBar />
      <MainToolbar />
      <main className="flex min-h-0 flex-1">
        <SideTabs />
        <Sidebar />
        <div className="flex min-w-0 flex-1 flex-col">
          <EditToolbar />
          <BudgetGrid />
          <DetailPane />
        </div>
      </main>
      <StatusBar />
      <div className="absolute -right-[29px] top-[200px] flex size-[47px] items-center rounded-full border-2 border-[#e8eeea] bg-gradient-to-b from-[#5cd672] to-[#2cb04a] pl-[3px] font-['Liberation_Sans',sans-serif] text-[11px] font-bold text-white shadow-md ring-1 ring-[#9aa8a0]">
        60
      </div>
    </div>
  );
}
